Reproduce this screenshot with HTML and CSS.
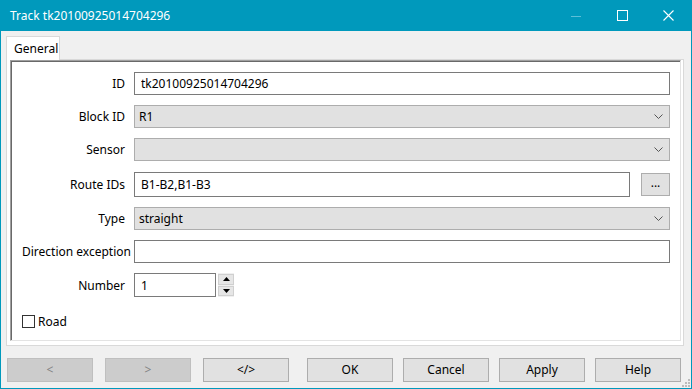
FILE: index.html
```html
<!DOCTYPE html>
<html lang="en">
<head>
  <meta charset="UTF-8">
  <title>Track tk20100925014704296</title>
  <link rel="stylesheet" href="styles.css">
</head>
<body>

  <div class="window">
    <div class="titlebar">
      <span class="title">Track tk20100925014704296</span>
      <div class="caption-btns">
        <span class="cap-btn">
          <svg width="10" height="10" viewBox="0 0 10 10"><line x1="0" y1="5.5" x2="10" y2="5.5" stroke="#5cbfd8" stroke-width="1"/></svg>
        </span>
        <span class="cap-btn">
          <svg width="11" height="11" viewBox="0 0 11 11"><rect x="0.5" y="0.5" width="10" height="10" fill="none" stroke="#fff" stroke-width="1"/></svg>
        </span>
        <span class="cap-btn">
          <svg width="11" height="11" viewBox="0 0 11 11"><path d="M0.5 0.5 L10.5 10.5 M10.5 0.5 L0.5 10.5" stroke="#fff" stroke-width="1.1"/></svg>
        </span>
      </div>
    </div>

    <div class="client">
      <div class="tabs">
        <span class="tab">General</span>
      </div>

      <div class="tab-panel">
        <div class="sunken">
          <div class="form">
            <label class="lbl">ID</label>
            <div class="field"><input class="text-input" type="text" value="tk20100925014704296"></div>

            <label class="lbl">Block ID</label>
            <div class="field combo"><span>R1</span>
              <svg width="9" height="5" viewBox="0 0 9 5"><polyline points="0.5,0.5 4.5,4.5 8.5,0.5" fill="none" stroke="#555" stroke-width="1"/></svg>
            </div>

            <label class="lbl">Sensor</label>
            <div class="field combo"><span></span>
              <svg width="9" height="5" viewBox="0 0 9 5"><polyline points="0.5,0.5 4.5,4.5 8.5,0.5" fill="none" stroke="#555" stroke-width="1"/></svg>
            </div>

            <label class="lbl">Route IDs</label>
            <div class="field route">
              <input class="text-input" type="text" value="B1-B2,B1-B3">
              <button class="dots-btn">...</button>
            </div>

            <label class="lbl">Type</label>
            <div class="field combo"><span>straight</span>
              <svg width="9" height="5" viewBox="0 0 9 5"><polyline points="0.5,0.5 4.5,4.5 8.5,0.5" fill="none" stroke="#555" stroke-width="1"/></svg>
            </div>

            <label class="lbl">Direction exception</label>
            <div class="field"><input class="text-input" type="text" value=""></div>

            <label class="lbl">Number</label>
            <div class="field number">
              <input class="text-input" type="text" value="1">
              <div class="spin">
                <span class="spin-btn"><svg width="7" height="4" viewBox="0 0 7 4"><polygon points="3.5,0 7,4 0,4" fill="#000"/></svg></span>
                <span class="spin-btn"><svg width="7" height="4" viewBox="0 0 7 4"><polygon points="0,0 7,0 3.5,4" fill="#000"/></svg></span>
              </div>
            </div>

            <div class="check-row">
              <span class="checkbox"></span>
              <span>Road</span>
            </div>
          </div>
        </div>
      </div>

      <div class="button-bar">
        <div class="btn-group nav-group">
          <button class="btn" disabled>&lt;</button>
          <button class="btn" disabled>&gt;</button>
          <button class="btn">&lt;/&gt;</button>
        </div>
        <div class="btn-group main-group">
          <button class="btn">OK</button>
          <button class="btn">Cancel</button>
          <button class="btn">Apply</button>
          <button class="btn">Help</button>
        </div>
        <svg class="grip" width="9" height="9" viewBox="0 0 9 9">
          <rect x="7" y="1" width="2" height="2" fill="#bcbcbc"/>
          <rect x="4" y="4" width="2" height="2" fill="#bcbcbc"/>
          <rect x="7" y="4" width="2" height="2" fill="#bcbcbc"/>
          <rect x="1" y="7" width="2" height="2" fill="#bcbcbc"/>
          <rect x="4" y="7" width="2" height="2" fill="#bcbcbc"/>
          <rect x="7" y="7" width="2" height="2" fill="#bcbcbc"/>
        </svg>
      </div>
    </div>
  </div>

</body>
</html>
```

FILE: styles.css
```css
body {
  margin: 0;
  font-family: "Segoe UI", "Noto Sans", sans-serif;
  font-size: 12px;
  color: #000;
  background: #fff;
}

.window {
  width: 692px;
  height: 389px;
  box-sizing: border-box;
  border: 1px solid #0099bc;
  border-top: 0;
  background: #f0f0f0;
  display: flex;
  flex-direction: column;
}

.titlebar {
  height: 31px;
  flex: none;
  background: #0099bc;
  display: flex;
  align-items: center;
  color: #fff;
  padding-left: 9px;
}

.title {
  flex: 1;
  margin-top: -1px;
}

.caption-btns {
  display: flex;
  height: 31px;
}

.cap-btn {
  width: 46px;
  display: flex;
  align-items: center;
  justify-content: center;
}

.client {
  flex: 1;
  display: flex;
  flex-direction: column;
  position: relative;
}

.tabs {
  display: flex;
  padding: 5px 0 0 5px;
  height: 23px;
}

.tab {
  background: #fff;
  border: 1px solid #d9d9d9;
  border-bottom: 0;
  width: 54px;
  padding-left: 7px;
  box-sizing: border-box;
  display: flex;
  align-items: center;
  height: 24px;
  position: relative;
  z-index: 1;
}

.tab-panel {
  margin-left: 5px;
  width: 678px;
  height: 287px;
  box-sizing: border-box;
  background: #fff;
  border: 1px solid #d9d9d9;
  padding: 0 2px 4px 3px;
  display: flex;
}

.sunken {
  flex: 1;
  border: 1px solid;
  border-color: #a0a0a0 #e3e3e3 #e3e3e3 #a0a0a0;
  box-shadow: inset 1px 1px 0 #696969;
}

.form {
  display: grid;
  grid-template-columns: 103px 1fr;
  grid-template-rows: 23px 23px 23px 26px 23px 23px 24px 13px;
  column-gap: 9px;
  row-gap: 10px;
  padding: 11px 10px 0 11px;
}

.lbl {
  align-self: center;
  text-align: right;
  white-space: nowrap;
}

.field {
  display: flex;
  align-items: center;
}

.text-input {
  width: 100%;
  height: 23px;
  box-sizing: border-box;
  border: 1px solid #7a7a7a;
  background: #fff;
  font: inherit;
  padding: 0 6px;
  margin: 0;
  outline: none;
}

.combo {
  border: 1px solid #adadad;
  background: #e1e1e1;
  box-sizing: border-box;
  height: 23px;
  padding: 0 6px 0 4px;
  justify-content: space-between;
}

.route .text-input {
  height: 25px;
  width: 496px;
  flex: none;
}

.dots-btn {
  margin-left: 11px;
  width: 29px;
  height: 23px;
  border: 1px solid #adadad;
  background: #e1e1e1;
  font: inherit;
  padding: 0 0 3px;
}

.number .text-input {
  width: 82px;
  height: 24px;
  flex: none;
}

.spin {
  margin-left: 2px;
  width: 16px;
  height: 24px;
  display: flex;
  flex-direction: column;
  gap: 1px;
  background: #f0f0f0;
  padding: 1px 0;
  box-sizing: border-box;
}

.spin-btn {
  flex: 1;
  background: #e6e6e6;
  border: 1px solid #d0d0d0;
  display: flex;
  align-items: center;
  justify-content: center;
}

.check-row {
  grid-column: 1 / 3;
  margin-top: 14px;
  display: flex;
  align-items: center;
  gap: 3px;
}

.checkbox {
  width: 13px;
  height: 13px;
  box-sizing: border-box;
  border: 1px solid #333;
  background: #fff;
}

.button-bar {
  display: flex;
  padding: 12px 0 0 6px;
}

.btn-group {
  display: flex;
}

.nav-group {
  gap: 12px;
}

.main-group {
  gap: 10px;
  margin-left: 18px;
}

.btn {
  width: 86px;
  height: 24px;
  box-sizing: border-box;
  border: 1px solid #adadad;
  background: #e1e1e1;
  font: inherit;
  color: #000;
  padding: 0 0 1px;
}

.btn:disabled {
  background: #cccccc;
  border-color: #bfbfbf;
  color: #838383;
}

.grip {
  position: absolute;
  right: 1px;
  bottom: 1px;
}
```
